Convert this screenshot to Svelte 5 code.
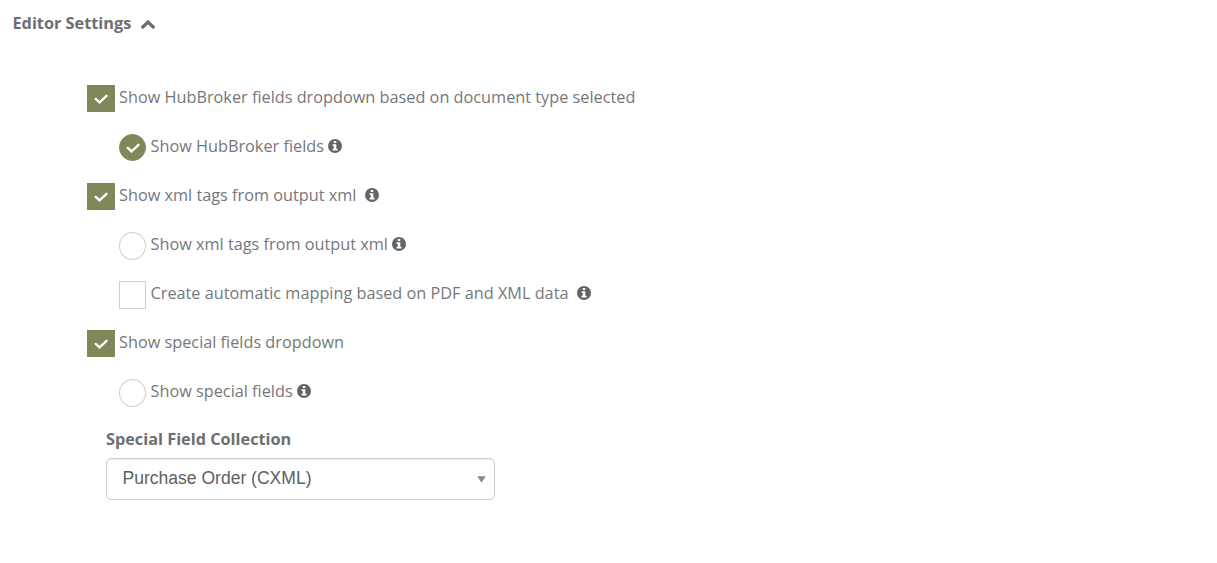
<script lang="ts">
  type Option = {
    label: string;
    type: 'checkbox' | 'radio';
    checked: boolean;
    nested?: boolean;
    info?: 'near' | 'far';
  };

  let options = $state<Option[]>([
    { label: 'Show HubBroker fields dropdown based on document type selected', type: 'checkbox', checked: true },
    { label: 'Show HubBroker fields', type: 'radio', checked: true, nested: true, info: 'near' },
    { label: 'Show xml tags from output xml', type: 'checkbox', checked: true, info: 'far' },
    { label: 'Show xml tags from output xml', type: 'radio', checked: false, nested: true, info: 'near' },
    { label: 'Create automatic mapping based on PDF and XML data', type: 'checkbox', checked: false, nested: true, info: 'far' },
    { label: 'Show special fields dropdown', type: 'checkbox', checked: true },
    { label: 'Show special fields', type: 'radio', checked: false, nested: true, info: 'near' }
  ]);

  let open = $state(true);

  function toggle(option: Option) {
    if (option.type === 'checkbox') {
      option.checked = !option.checked;
      return;
    }
    for (const o of options) {
      if (o.type === 'radio') o.checked = o === option;
    }
  }
</script>

<section class="settings">
  <button class="heading" aria-expanded={open} onclick={() => (open = !open)}>
    <span>Editor Settings</span>
    <svg class="chevron" class:closed={!open} width="16" height="11" viewBox="0 0 16 11">
      <path d="M1.8 9 8 3l6.2 6" />
    </svg>
  </button>

  {#if open}
    <div class="options">
      {#each options as option}
        <div class="option" class:nested={option.nested}>
          <button
            class="box {option.type}"
            class:checked={option.checked}
            role={option.type}
            aria-checked={option.checked}
            aria-label={option.label}
            onclick={() => toggle(option)}
          >
            {#if option.checked}
              <svg width="16" height="14" viewBox="0 0 16 14">
                <path d="m2.8 6.9 3.7 3.5 7-6.6" />
              </svg>
            {/if}
          </button>
          <span class="label">{option.label}</span>
          {#if option.info}
            <svg class="info {option.info}" width="14" height="14" viewBox="0 0 14 14">
              <circle cx="7" cy="7" r="7" />
              <path d="M5.8 2h2.5v2.1H5.8zM4.6 5.2h3.7v4.6h1.2v1.8H4.6V9.8h1.2V7H4.6z" />
            </svg>
          {/if}
        </div>
      {/each}
    </div>

    <div class="collection">
      <span class="title">Special Field Collection</span>
      <button class="select">
        <span>Purchase Order (CXML)</span>
        <svg width="9" height="7" viewBox="0 0 9 7"><path d="M.3.3h8.4L4.5 6.7z" /></svg>
      </button>
    </div>
  {/if}
</section>

<style>
  :global(body) {
    background: #fff;
  }
  .settings {
    padding: 12px;
    color: #76777a;
    font: 16.27px/22px 'Open Sans', sans-serif;
  }
  button {
    margin: 0;
    padding: 0;
    border: 0;
    background: none;
    color: inherit;
    font: inherit;
    cursor: pointer;
  }
  .heading {
    display: flex;
    align-items: center;
    gap: 9px;
    height: 22px;
    padding-left: 0.5px;
    color: #6d6e71;
    font-weight: 700;
  }
  .chevron {
    margin-top: 2px;
    fill: none;
    stroke: #6d6e71;
    stroke-width: 3.2;
  }
  .closed {
    transform: rotate(180deg);
  }
  .options {
    padding: 51px 0 0 75px;
  }
  .option {
    display: flex;
    align-items: flex-start;
    height: 27px;
    margin-bottom: 22px;
  }
  .nested {
    padding-left: 32px;
  }
  .box {
    display: flex;
    align-items: center;
    justify-content: center;
    box-sizing: border-box;
    width: 28px;
    height: 27px;
    flex-shrink: 0;
    border: 1px solid #d3cec6;
  }
  .nested .box {
    width: 27px;
    height: 28px;
  }
  .radio {
    border-radius: 50%;
  }
  .option .box.checked {
    height: 27px;
    border-color: #7f875b;
    background: #7f875b;
  }
  .box path {
    fill: none;
    stroke: #fff;
    stroke-width: 2.4;
    stroke-linecap: round;
  }
  .label {
    margin: 1px 0 0 4px;
    white-space: nowrap;
  }
  .nested .label {
    margin-left: 4.5px;
  }
  .info {
    margin: 5px 0 0 4px;
    fill: #636468;
  }
  .info.far {
    margin-left: 8.5px;
  }
  .info path {
    fill: #fff;
  }
  .collection {
    display: flex;
    flex-direction: column;
    gap: 8px;
    width: 389px;
    margin-left: 94px;
  }
  .title {
    color: #6d6e71;
    font-weight: 700;
  }
  .select {
    display: flex;
    align-items: center;
    justify-content: space-between;
    box-sizing: border-box;
    height: 42px;
    padding: 0 8px 2px 15.5px;
    border: 1px solid #ccc;
    border-radius: 5px;
    box-shadow: inset 0 1px 1px rgb(0 0 0 / 0.075);
    color: #606060;
    font: 17.55px/22px 'Liberation Sans', Arial, sans-serif;
  }
  .select svg {
    margin-top: 3px;
    fill: #888;
  }
</style>
